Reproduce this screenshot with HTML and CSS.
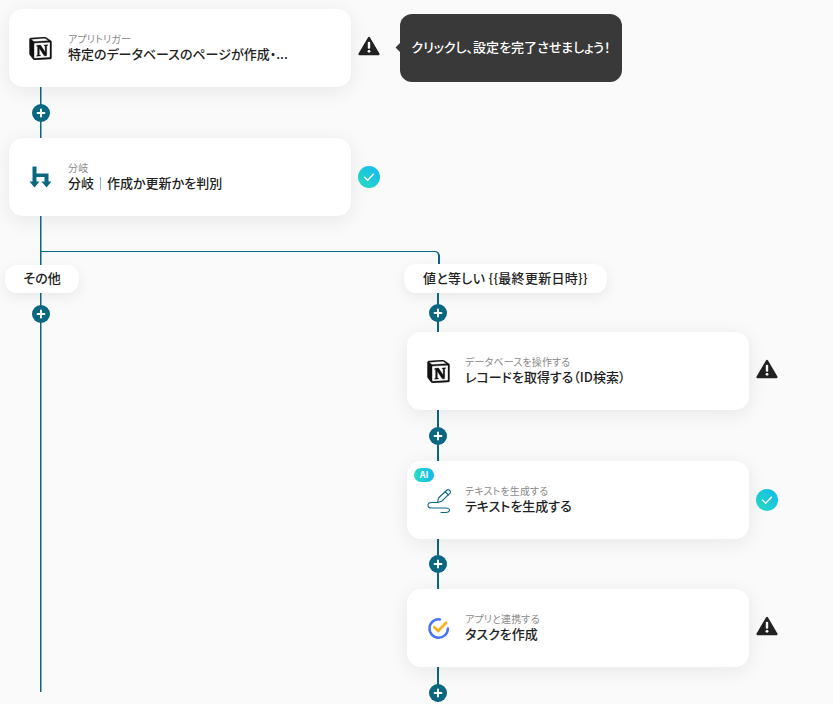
FILE: index.html
```html
<!DOCTYPE html>
<html lang="ja">
<head>
<meta charset="utf-8">
<title>フロー</title>
<link rel="stylesheet" href="styles.css">
</head>
<body>
<svg class="defs" width="0" height="0" aria-hidden="true">
  <defs>
    <linearGradient id="done" x1="0" y1="1" x2="1" y2="0">
      <stop offset="0" stop-color="#2bdcc0"/><stop offset="1" stop-color="#10b9ee"/>
    </linearGradient>
    <symbol id="notion" viewBox="0 0 24 24">
      <path fill="#fff" d="M3 4l15-2 4 3v17l-17 1-3-4z"/>
      <path fill="#111" d="M1 3l4 4v15l-4-5z"/>
      <path fill="#111" stroke="#111" stroke-width=".35" d="M4.459 4.208c.746.606 1.026.56 2.428.466l13.215-.793c.28 0 .047-.28-.046-.326L17.86 1.968c-.42-.326-.981-.7-2.055-.607L3.01 2.295c-.466.046-.56.28-.374.466zm.793 3.08v13.904c0 .747.373 1.027 1.214.98l14.523-.84c.841-.046.935-.56.935-1.167V6.354c0-.606-.233-.933-.748-.887l-15.177.887c-.56.047-.747.327-.747.934zm14.337.745c.093.42 0 .84-.42.888l-.7.14v10.264c-.608.327-1.168.514-1.635.514-.748 0-.935-.234-1.495-.933l-4.577-7.186v6.952L12.21 19s0 .84-1.168.84l-3.222.186c-.093-.186 0-.653.327-.746l.84-.233V9.854L7.822 9.76c-.094-.42.14-1.026.793-1.073l3.456-.233 4.764 7.279v-6.44l-1.215-.139c-.093-.514.28-.887.747-.933zM1.936 1.035l13.31-.98c1.634-.14 2.055-.047 3.082.7l4.249 2.986c.7.513.934.653.934 1.213v16.378c0 1.026-.373 1.634-1.68 1.726l-15.458.934c-.98.047-1.448-.093-1.962-.747l-3.129-4.06c-.56-.747-.793-1.306-.793-1.96V2.667c0-.839.374-1.54 1.447-1.632z"/>
    </symbol>
    <symbol id="warn" viewBox="0 0 22 20">
      <path fill="#222" stroke="#222" stroke-width="2.4" stroke-linejoin="round" d="M11 2 L20.4 18 H1.6 Z"/>
      <rect x="9.8" y="5.8" width="2.4" height="7" rx="1" fill="#fff"/>
      <circle cx="11" cy="15.3" r="1.4" fill="#fff"/>
    </symbol>
    <symbol id="check" viewBox="0 0 22 22">
      <circle cx="11" cy="11" r="11" fill="url(#done)"/>
      <path d="M6.6 11.2l3.1 3 5.7-6" fill="none" stroke="#fff" stroke-width="1.4" stroke-linecap="round" stroke-linejoin="round"/>
    </symbol>
    <symbol id="plus" viewBox="0 0 18 18">
      <circle cx="9" cy="9" r="9" fill="#0a6780"/>
      <path d="M9 5.6v6.8M5.6 9h6.8" stroke="#fff" stroke-width="2" stroke-linecap="round"/>
    </symbol>
  </defs>
</svg>

<main class="flow">
  <section class="step">
    <article class="card">
      <svg class="app-icon"><use href="#notion"/></svg>
      <div class="card-text">
        <p class="kicker">アプリトリガー</p>
        <p class="title">特定のデータベースのページが作成・...</p>
      </div>
    </article>
    <svg class="status warn"><use href="#warn"/></svg>
    <div class="tooltip">クリックし、設定を完了させましょう！</div>
  </section>

  <div class="link link-top"><svg class="plus"><use href="#plus"/></svg></div>

  <section class="step">
    <article class="card">
      <svg class="app-icon" viewBox="-.5 0 23 23">
        <path fill="#0a6780" d="M3 .5h4v7h12v8h3l-5 6-5-6h3v-4.5H7v4.5h3l-5 6-5-6h3z"/>
      </svg>
      <div class="card-text">
        <p class="kicker">分岐</p>
        <p class="title">分岐<span class="sep"></span>作成か更新かを判別</p>
      </div>
    </article>
    <svg class="status check"><use href="#check"/></svg>
  </section>

  <div class="branches">
    <div class="fork"></div>
    <div class="branch branch-left">
      <div class="label label-left">その他</div>
      <div class="link link-left"><svg class="plus"><use href="#plus"/></svg></div>
    </div>
    <div class="branch branch-right">
      <div class="label label-right">値と等しい {{最終更新日時}}</div>
      <div class="link-wide link-a"><svg class="plus"><use href="#plus"/></svg></div>

      <section class="step">
        <article class="card">
          <svg class="app-icon"><use href="#notion"/></svg>
          <div class="card-text">
            <p class="kicker">データベースを操作する</p>
            <p class="title">レコードを取得する（ID検索）</p>
          </div>
        </article>
        <svg class="status warn"><use href="#warn"/></svg>
      </section>

      <div class="link-wide link-b"><svg class="plus"><use href="#plus"/></svg></div>

      <section class="step">
        <article class="card">
          <span class="badge">AI</span>
          <svg class="app-icon icon-pen" viewBox="0 0 23 23">
            <g fill="none" stroke="#0a6780" stroke-width="1.1" stroke-linecap="round" stroke-linejoin="round">
              <path d="M10.5 13.5l1-4.5 8.5-8q1-.8 2 0l1.2 1.2q.8 1 0 2l-8.5 8z"/>
              <path d="M18.2 2.8l3.2 3.2"/>
              <path d="M9.5 13.5H4.5Q1 13.5 1 16.2 1 19 4.5 19H18.5Q22.5 19 22.5 21 22.5 23.5 18.5 23.5H14"/>
            </g>
          </svg>
          <div class="card-text">
            <p class="kicker">テキストを生成する</p>
            <p class="title">テキストを生成する</p>
          </div>
        </article>
        <svg class="status check"><use href="#check"/></svg>
      </section>

      <div class="link-wide link-c"><svg class="plus"><use href="#plus"/></svg></div>

      <section class="step">
        <article class="card">
          <svg class="app-icon" viewBox="0 0 24 24">
            <path d="M21.8 12A9.6 9.6 0 1 1 13.5 2.5" fill="none" stroke="#4a74f5" stroke-width="2.6" stroke-linecap="round"/>
            <path d="M7.6 10.6l4.2 4 8-8.6" fill="none" stroke="#fdb022" stroke-width="2.8" stroke-linecap="round" stroke-linejoin="round"/>
          </svg>
          <div class="card-text">
            <p class="kicker">アプリと連携する</p>
            <p class="title">タスクを作成</p>
          </div>
        </article>
        <svg class="status warn"><use href="#warn"/></svg>
      </section>

      <div class="link-wide link-d"><svg class="plus"><use href="#plus"/></svg></div>
    </div>
  </div>
</main>
</body>
</html>
```

FILE: styles.css
```css
* { box-sizing: border-box; }

html, body {
  margin: 0;
  height: 100%;
  overflow: hidden;
  background: #fafafa;
}

body {
  font-family: "Noto Sans CJK JP", "Noto Sans", sans-serif;
  color: #222;
  font-feature-settings: "palt";
}

.defs { position: absolute; }

.flow { padding: 9px 0 0 9px; }

.step {
  display: flex;
  align-items: center;
  height: 78px;
}

.card {
  position: relative;
  display: flex;
  align-items: center;
  width: 342px;
  height: 78px;
  padding-left: 20px;
  background: #fff;
  border-radius: 14px;
  box-shadow: 0 4px 20px rgba(0, 0, 0, .08);
}

.app-icon {
  flex: none;
  width: 23px;
  height: 23px;
  margin-right: 16px;
}

.branch-right .app-icon { margin-right: 15px; }

.icon-pen { overflow: visible; }

.card-text {
  min-width: 0;
  padding-bottom: 3px;
}

.kicker {
  margin: 0;
  padding-top: 1px;
  font-size: 10px;
  line-height: 12px;
  letter-spacing: .15px;
  color: #8a8a8a;
}

.title {
  margin: 0;
  font-size: 13px;
  line-height: 17px;
  font-weight: 500;
  color: #222;
  white-space: nowrap;
}

.sep {
  display: inline-block;
  width: 1px;
  height: 13px;
  margin: 0 6px;
  vertical-align: -2px;
  background: #8fb8c6;
}

.status {
  flex: none;
  width: 22px;
  height: 22px;
  margin-left: 7px;
}

.warn {
  height: 20px;
  margin-bottom: 4px;
}

.tooltip {
  position: relative;
  display: flex;
  align-items: center;
  justify-content: center;
  width: 222px;
  height: 68px;
  margin-left: 20px;
  padding-bottom: 3px;
  background: #393939;
  border-radius: 12px;
  color: #fff;
  font-size: 13px;
  font-weight: 500;
}

.tooltip::before {
  content: "";
  position: absolute;
  left: -3px;
  top: 30px;
  width: 7px;
  height: 7px;
  background: #393939;
  transform: rotate(45deg);
}

.plus { display: block; width: 18px; height: 18px; }

.link {
  display: flex;
  align-items: center;
  justify-content: center;
  width: 18px;
  margin-left: 22.5px;
  background: linear-gradient(#0a6780, #0a6780) center / 1.5px 100% no-repeat;
}

.link-top { height: 51px; }

.branches {
  position: relative;
  display: flex;
  height: 488px;
  margin-left: -9px;
}

.fork {
  position: absolute;
  left: 40px;
  top: 35px;
  width: 399.5px;
  height: 13px;
  border-top: 1px solid #0a6780;
  border-right: 2px solid #0a6780;
  border-top-right-radius: 5px;
}

.branch-left {
  position: relative;
  width: 404px;
  height: 476px;
  padding: 49px 0 0 5px;
  background: linear-gradient(#0a6780, #0a6780) 40px 0 / 1.5px 100% no-repeat;
}

.label {
  display: flex;
  align-items: center;
  justify-content: center;
  padding-bottom: 3px;
  background: #fff;
  border-radius: 12px;
  box-shadow: 0 4px 14px rgba(0, 0, 0, .07);
  font-size: 13px;
  font-weight: 500;
  color: #222;
}

.label-left { width: 74px; height: 28px; }

.link-left { height: 42px; margin-left: 26.5px; background: none; }

.branch-right { position: relative; padding: 48px 0 0 3px; }

.label-right {
  width: 203px;
  height: 29px;
  margin-left: -3px;
  letter-spacing: .3px;
}

.link-wide {
  display: flex;
  align-items: center;
  justify-content: center;
  width: 18px;
  margin-left: 22px;
  background: linear-gradient(#0a6780, #0a6780) center / 2px 100% no-repeat;
}

.link-a { height: 39px; }
.link-b { height: 51px; }
.link-c { height: 50px; }
.link-d { height: 35px; align-items: flex-end; }

.badge {
  position: absolute;
  left: 7px;
  top: 7px;
  width: 20px;
  height: 14px;
  border-radius: 7px;
  background: linear-gradient(90deg, #2bdcc0, #10b9ee);
  color: #fff;
  font-size: 9px;
  font-weight: 700;
  line-height: 14px;
  text-align: center;
}
```
